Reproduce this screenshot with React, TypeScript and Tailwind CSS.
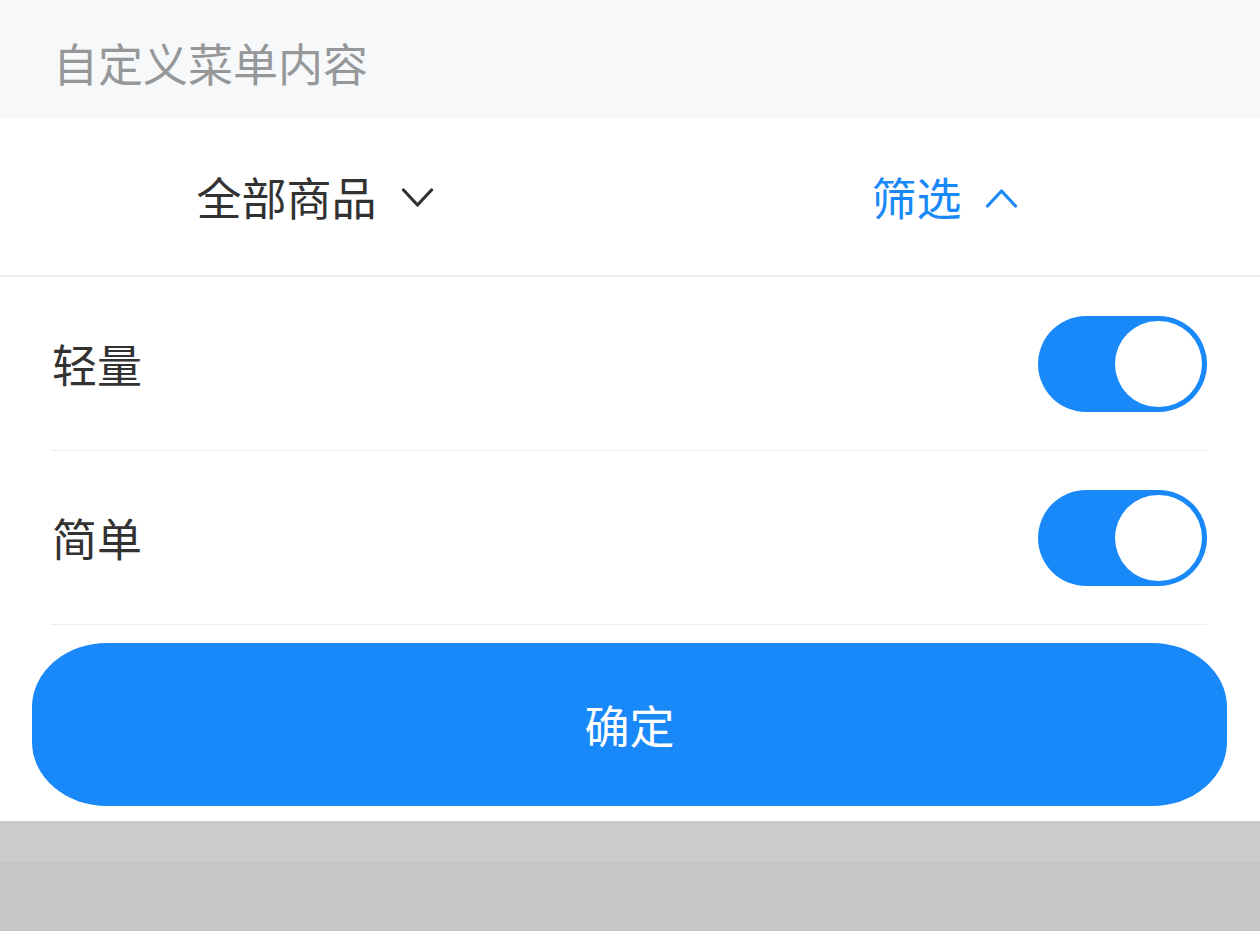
import { useState } from 'react';

const font = { fontFamily: '"Noto Sans CJK SC", "Noto Sans", sans-serif' };

function Chevron({ up, className }: { up?: boolean; className?: string }) {
  return (
    <svg viewBox="0 0 32 20" className={className} fill="none" stroke="currentColor" strokeWidth={3.2} strokeLinecap="round" strokeLinejoin="round">
      {up ? <path d="M2 18 L16 3 L30 18" /> : <path d="M2 2 L16 17 L30 2" />}
    </svg>
  );
}

function Toggle({ on, onChange }: { on: boolean; onChange: () => void }) {
  return (
    <button
      onClick={onChange}
      className={`flex items-center w-[169px] h-[96px] rounded-full px-[5px] ${on ? 'bg-[#1989fa] justify-end' : 'bg-[#e5e5ea] justify-start'}`}
    >
      <span className="block w-[87px] h-[86px] rounded-full bg-white" />
    </button>
  );
}

export default function App() {
  const [light, setLight] = useState(true);
  const [simple, setSimple] = useState(true);

  const rows = [
    { label: '轻量', on: light, toggle: () => setLight(!light) },
    { label: '简单', on: simple, toggle: () => setSimple(!simple) },
  ];

  return (
    <div className="w-[1260px] h-[931px] flex flex-col bg-[#c6c6c8] overflow-hidden" style={font}>
      {/* titolo sezione */}
      <div className="h-[118px] shrink-0 bg-[#f7f8fa] flex items-center pl-[53px] pt-[8px] text-[45px] text-[#969799]">
        自定义菜单内容
      </div>

      {/* barra menu */}
      <div className="h-[159px] shrink-0 bg-white flex border-b-2 border-[#ebedf0]">
        <div className="flex-1 flex items-center justify-center gap-[24px] text-[45px] text-[#323233]">
          <span>全部商品</span>
          <Chevron className="w-[33px] h-[20px] mt-[2px]" />
        </div>
        <div className="flex-1 flex items-center justify-center gap-[22px] text-[45px] text-[#1989fa]">
          <span>筛选</span>
          <Chevron up className="w-[35px] h-[20px] mt-[2px]" />
        </div>
      </div>

      {/* contenuto dropdown */}
      <div className="shrink-0 bg-white pb-[15px]">
        {rows.map((r) => (
          <div key={r.label} className="mx-[51px] mr-[53px] h-[174px] flex items-center justify-between border-b border-[#ebedf0]">
            <span className="text-[45px] text-[#323233] pl-[1px]">{r.label}</span>
            <Toggle on={r.on} onChange={r.toggle} />
          </div>
        ))}
        <div className="px-[32px] pr-[33px] pt-[18px]">
          <button className="w-full h-[163px] rounded-[75px/64px] bg-[#1989fa] text-white text-[45px] flex items-center justify-center">
            确定
          </button>
        </div>
      </div>

      {/* overlay */}
      <div className="h-[41px] shrink-0 bg-[#cbcbcb]" />
      <div className="flex-1 bg-[#c6c6c8]" />
    </div>
  );
}
